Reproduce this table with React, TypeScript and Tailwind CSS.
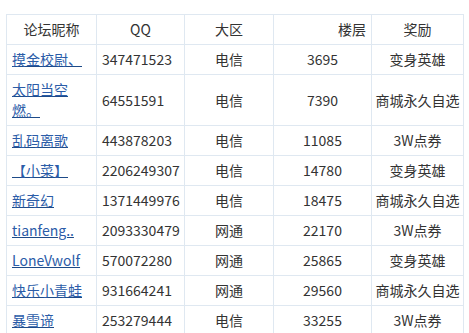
const rows = [
  { name: "摸金校尉、", qq: "347471523", area: "电信", floor: "3695", prize: "变身英雄" },
  { name: "太阳当空燃。", qq: "64551591", area: "电信", floor: "7390", prize: "商城永久自选" },
  { name: "乱码离歌", qq: "443878203", area: "电信", floor: "11085", prize: "3W点券" },
  { name: "【小菜】", qq: "2206249307", area: "电信", floor: "14780", prize: "变身英雄" },
  { name: "新奇幻", qq: "1371449976", area: "电信", floor: "18475", prize: "商城永久自选" },
  { name: "tianfeng..", qq: "2093330479", area: "网通", floor: "22170", prize: "3W点券" },
  { name: "LoneVwolf", qq: "570072280", area: "网通", floor: "25865", prize: "变身英雄" },
  { name: "快乐小青蛙", qq: "931664241", area: "网通", floor: "29560", prize: "商城永久自选" },
  { name: "暴雪谛", qq: "253279444", area: "电信", floor: "33255", prize: "3W点券" },
];

const cell = "border border-[#dfe8f1] px-[5px] py-[4px] align-middle";

export default function App() {
  return (
    <div
      className="min-h-screen bg-white pl-[6px] pt-[14px] text-[14px] leading-[21px] text-[#333333]"
      style={{ fontFamily: '"Noto Sans CJK SC", "Noto Sans", sans-serif' }}
    >
      <table className="w-[457px] table-fixed border-collapse">
        <colgroup>
          <col className="w-[90px]" />
          <col className="w-[88px]" />
          <col className="w-[89px]" />
          <col className="w-[98px]" />
          <col className="w-[92px]" />
        </colgroup>
        <thead>
          <tr>
            <th className={`${cell} text-center font-normal`}>论坛昵称</th>
            <th className={`${cell} text-center font-normal`}>QQ</th>
            <th className={`${cell} text-center font-normal`}>大区</th>
            <th className={`${cell} text-right font-normal`}>楼层</th>
            <th className={`${cell} text-center font-normal`}>奖励</th>
          </tr>
        </thead>
        <tbody>
          {rows.map((r) => (
            <tr key={r.qq}>
              <td className={`${cell} text-left`}>
                <a href="#" className="text-[#2b5ca8] underline decoration-[#1d4a88]">
                  {r.name}
                </a>
              </td>
              <td className={`${cell} text-left`}>{r.qq}</td>
              <td className={`${cell} text-center`}>{r.area}</td>
              <td className={`${cell} text-center`}>{r.floor}</td>
              <td className="border border-[#dfe8f1] px-0 py-[4px] text-center align-middle whitespace-nowrap">
                {r.prize}
              </td>
            </tr>
          ))}
        </tbody>
      </table>
    </div>
  );
}
